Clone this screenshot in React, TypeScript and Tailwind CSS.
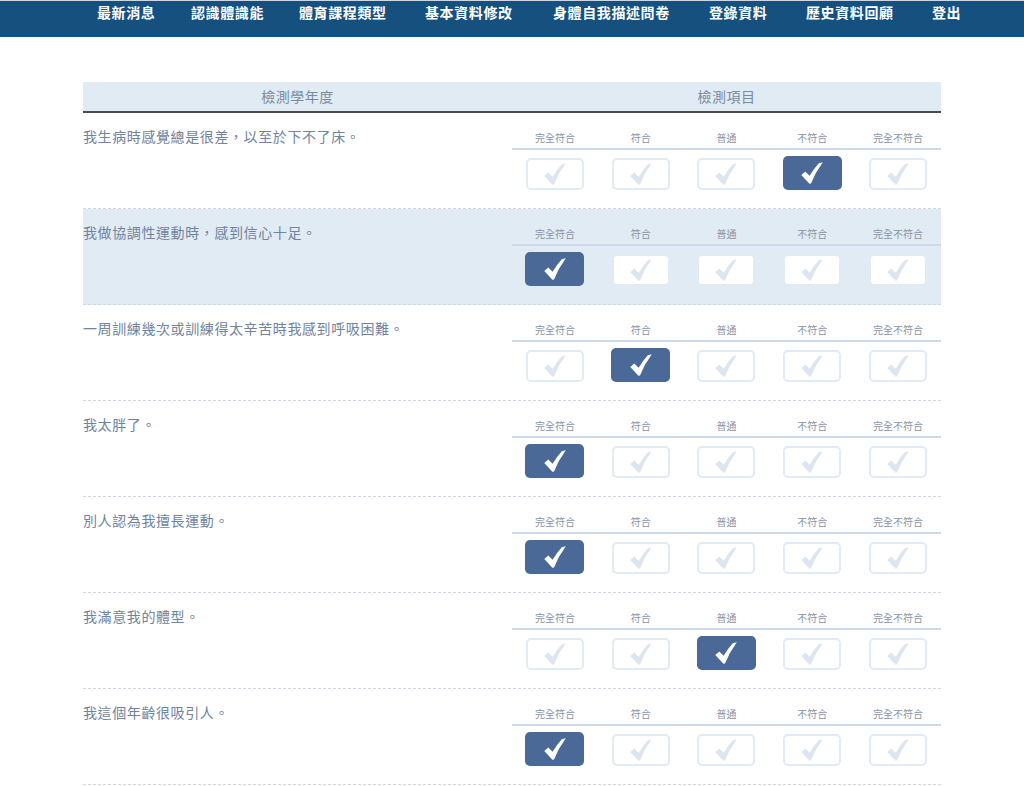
import React from "react";

const navItems: { label: string; w: string }[] = [
  { label: "最新消息", w: "w-[94px]" },
  { label: "認識體識能", w: "w-[108px]" },
  { label: "體育課程類型", w: "w-[126px]" },
  { label: "基本資料修改", w: "w-[128px]" },
  { label: "身體自我描述問卷", w: "w-[156px]" },
  { label: "登錄資料", w: "w-[97px]" },
  { label: "歷史資料回顧", w: "w-[126px]" },
  { label: "登出", w: "w-[60px]" },
];

const options = ["完全符合", "符合", "普通", "不符合", "完全不符合"];

const questions: { text: string; sel: number }[] = [
  { text: "我生病時感覺總是很差，以至於下不了床。", sel: 3 },
  { text: "我做協調性運動時，感到信心十足。", sel: 0 },
  { text: "一周訓練幾次或訓練得太辛苦時我感到呼吸困難。", sel: 1 },
  { text: "我太胖了。", sel: 0 },
  { text: "別人認為我擅長運動。", sel: 0 },
  { text: "我滿意我的體型。", sel: 2 },
  { text: "我這個年齡很吸引人。", sel: 0 },
];

function Check({ color }: { color: string }) {
  return (
    <svg width="22" height="22" viewBox="0 0 22 22" aria-hidden="true">
      <path
        d="M0.3 13 L4.3 9.4 L8.6 13.8 Q12.5 7 17.8 1.2 L21.8 0.2 Q14.5 10 10 21.6 L8.4 21.8 Z"
        fill={color}
      />
    </svg>
  );
}

function Box({ selected }: { selected: boolean }) {
  if (selected) {
    return (
      <div className="w-[59px] h-[34px] -mt-[2px] rounded-[5px] bg-[#4a6996] flex items-center justify-center">
        <Check color="#ffffff" />
      </div>
    );
  }
  return (
    <div className="w-[58px] h-[32px] rounded-[5px] bg-white border-2 border-[#e2eaf3] flex items-center justify-center">
      <Check color="#dde6ef" />
    </div>
  );
}

export default function App() {
  return (
    <div
      className="min-h-[786px] bg-white"
      style={{ fontFamily: '"Noto Sans CJK TC", "Noto Sans", sans-serif' }}
    >
      <nav className="h-[37px] bg-[#15507f] border-t border-[#cfd8e2] flex items-start pl-[97px] pt-[1px]">
        {navItems.map((n) => (
          <div
            key={n.label}
            className={`${n.w} shrink-0 text-white font-bold text-[14px] leading-[20px] tracking-[0.6px]`}
          >
            {n.label}
          </div>
        ))}
      </nav>

      <div className="w-[858px] mx-auto mt-[45px]">
        <div className="flex h-[31px] bg-[#e1ebf3] border-b-2 border-[#4a4a4a] text-[14px] text-[#7a8aa2] leading-[29px] tracking-[0.5px]">
          <div className="w-1/2 text-center">檢測學年度</div>
          <div className="w-1/2 text-center">檢測項目</div>
        </div>

        {questions.map((q, i) => (
          <div
            key={i}
            className={`flex h-[96px] border-b border-dashed border-[#d0d6e4] ${
              i === 1 ? "bg-[#e1ebf3]" : ""
            }`}
          >
            <div className="w-1/2 pt-[13px] text-[14px] leading-[20px] text-[#71839d] tracking-[0.6px]">
              {q.text}
            </div>
            <div className="w-1/2 pt-[18px]">
              <div className="grid grid-cols-5 border-b-2 border-[#cfd8e8] pb-[3px]">
                {options.map((o) => (
                  <div
                    key={o}
                    className="text-center text-[10px] leading-[14px] text-[#8a93a4]"
                  >
                    {o}
                  </div>
                ))}
              </div>
              <div className="grid grid-cols-5 mt-[8px]">
                {options.map((o, j) => (
                  <div key={o} className="flex justify-center">
                    <Box selected={q.sel === j} />
                  </div>
                ))}
              </div>
            </div>
          </div>
        ))}
      </div>
    </div>
  );
}
